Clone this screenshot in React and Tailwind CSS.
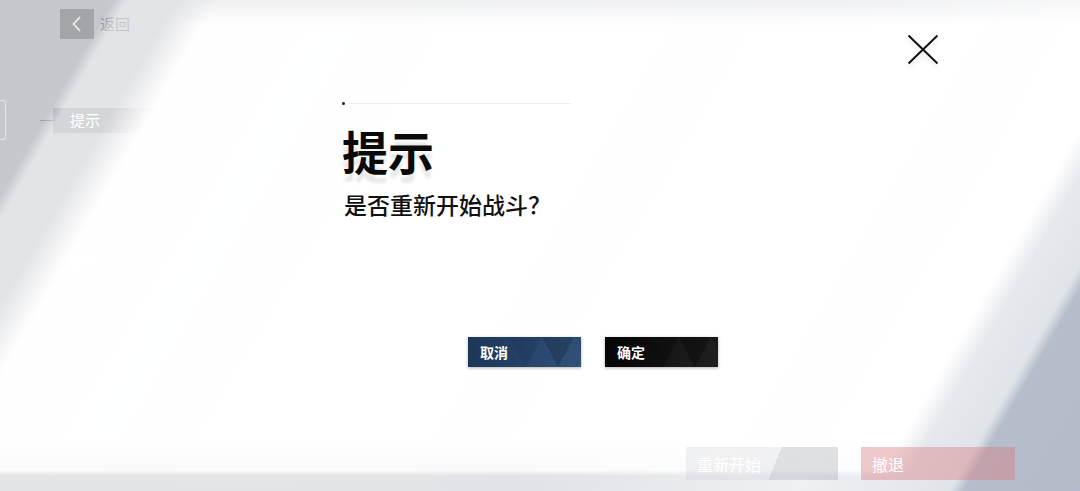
import React from 'react';

const cjk = "font-['Noto_Sans_CJK_SC','Noto_Sans',sans-serif]";

// faint triangle pattern used on the dialog buttons
const Facets = ({ tone }) => (
  <svg className="pointer-events-none absolute inset-0 h-full w-full" viewBox="0 0 113 30" preserveAspectRatio="none">
    <polygon points="58,30 74,0 90,30" fill={tone} opacity="0.04" />
    <polygon points="74,0 90,30 106,0" fill="#000" opacity="0.12" />
    <polygon points="90,30 106,0 113,14 113,30" fill={tone} opacity="0.04" />
    <polygon points="40,0 58,30 74,0" fill="#000" opacity="0.05" />
  </svg>
);

const DialogButton = ({ label, fill, tone }) => (
  <button
    className={`relative h-[30px] w-[113px] overflow-hidden pl-[12px] text-left text-[14px] font-bold text-white shadow-[0_1px_3px_rgba(0,0,0,0.3)] ${fill}`}
  >
    <Facets tone={tone} />
    <span className="relative">{label}</span>
  </button>
);

export default function App() {
  return (
    <div className={`relative h-[491px] w-[1080px] overflow-hidden bg-[linear-gradient(120deg,#c4c7cc_0%,#c7cad0_40%,#bcc3ce_75%,#b2bbc9_100%)] ${cjk}`}>
      {/* game screen behind the dialog */}
      <div className="flex h-full flex-col">
        <div className="flex items-center gap-[6px] pl-[60px] pt-[9px]">
          <div className="flex h-[30px] w-[34px] items-center justify-center bg-[#a3a5a9]">
            <svg width="14" height="18" viewBox="0 0 14 18">
              <path d="M10 2 L3.5 9 L10 16" fill="none" stroke="#ececec" strokeWidth="1.8" />
            </svg>
          </div>
          <span className="text-[15px] text-[#8a8d92]">返回</span>
        </div>

        <div className="mt-[61px] flex items-center">
          <div className="h-[40px] w-[6px] rounded-r-[3px] border-y border-r border-[#e2e3e6]" />
          <div className="ml-[34px] h-px w-[13px] bg-[#9ea1a6]" />
          <div className="flex h-[25px] w-[122px] items-center bg-[#a9abb0] pl-[17px] text-[15px] text-white">提示</div>
        </div>
        <div className="ml-[70px] mt-[45px] text-[15px] text-[#c9cbcf]">画面</div>
        <div className="ml-[70px] mt-[40px] text-[15px] text-[#d3d5d8]">操作</div>
      </div>

      {/* translucent slanted sheet */}
      <div className="absolute inset-0 bg-[linear-gradient(120deg,rgba(255,255,255,0)_98px,rgba(255,255,255,0.5)_110px,rgba(255,255,255,0.5)_700px,rgba(255,255,255,0.76)_935px,rgba(255,255,255,0.58)_1068px,rgba(255,255,255,0)_1080px)]" />
      {/* main slanted white panel, fading out at top and bottom */}
      <div className="absolute inset-0 bg-[linear-gradient(120deg,rgba(255,255,255,0)_152px,rgba(255,255,255,0.97)_188px,rgba(255,255,255,0.98)_1000px,rgba(255,255,255,0)_1024px)] [mask-image:linear-gradient(180deg,rgba(0,0,0,0.45)_0px,#000_26px,#000_440px,rgba(0,0,0,0.85)_470px,rgba(0,0,0,0)_476px)]" />

      {/* bottom action bar, seen through the sheet */}
      <div className="absolute bottom-[11px] right-[65px] flex gap-[23px]">
        <div className="flex h-[33px] w-[152px] items-center bg-[linear-gradient(112deg,rgba(200,203,208,0.25)_0_58%,rgba(150,155,162,0.3)_58%_100%)] pl-[11px] text-[16px] text-white">
          重新开始
        </div>
        <div className="flex h-[33px] w-[154px] items-center bg-[rgba(214,120,125,0.4)] pl-[11px] text-[16px] text-white">
          撤退
        </div>
      </div>
      <div className="absolute left-[1011px] top-[432px] h-[3px] w-[3px] bg-[#b9bec6]" />

      {/* dialog */}
      <button className="absolute left-[905px] top-[32px]">
        <svg width="36" height="36" viewBox="0 0 36 36" className="[filter:drop-shadow(0_4px_2px_rgba(0,0,0,0.1))]">
          <path d="M3.5 3.5 L32.5 31.5 M32.5 3.5 L3.5 31.5" stroke="#111" strokeWidth="2" />
        </svg>
      </button>

      <div className="absolute inset-0 flex flex-col pl-[342px] pt-[102px]">
        <div className="flex items-center">
          <div className="h-[3px] w-[3px] rounded-full bg-[#222]" />
          <div className="ml-[4px] h-px w-[222px] bg-[#ececee]" />
        </div>
        <h1 className="mt-[22px] text-[46px] font-bold leading-none text-[#0a0a0a] [text-shadow:0_8px_3px_rgba(0,0,0,0.09)]">
          提示
        </h1>
        <p className="ml-[2px] mt-[20px] text-[23px] font-medium leading-none text-[#111]">是否重新开始战斗？</p>
        <div className="ml-[126px] mt-[121px] flex gap-[24px]">
          <DialogButton label="取消" fill="bg-[linear-gradient(90deg,#1d3757,#25426a_55%,#2c4e72)]" tone="#9bb8d8" />
          <DialogButton label="确定" fill="bg-[linear-gradient(90deg,#050505,#111_55%,#191919)]" tone="#bbbbbb" />
        </div>
      </div>
    </div>
  );
}
